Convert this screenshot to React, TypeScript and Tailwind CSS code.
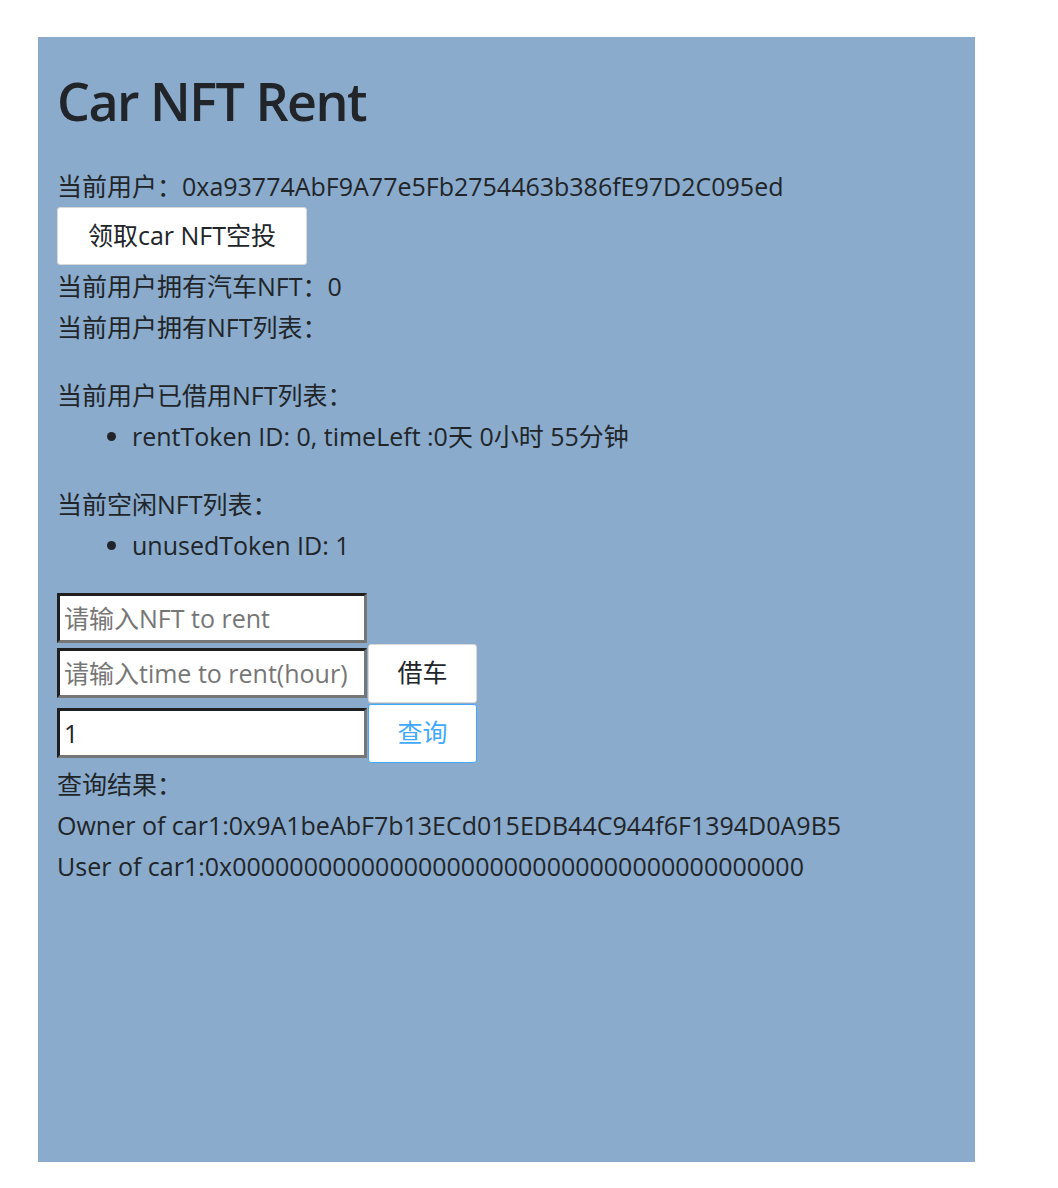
const font = "font-['Open_Sans','Noto_Sans_CJK_SC',sans-serif]"

const inputCls =
  'w-[310px] h-[50px] bg-white border-[3px] border-t-[#1f1f1f] border-l-[#1f1f1f] border-r-[#767676] border-b-[#767676] px-[4px] text-[25px] text-[#212529] placeholder:text-[#767676] outline-none align-middle'

const App = () => {
  return (
    <div className={`min-h-screen bg-white pt-[37px] pl-[38px] ${font}`}>
      <div className="w-[937px] h-[1125px] bg-[#8aabcb] px-[19px] pt-[30px] text-[#212529] text-[25px]">
        <h1 className="text-[52px] leading-[67px] font-semibold tracking-[-1.5px] mb-[32px]">Car NFT Rent</h1>
        <div className="leading-[41px]">当前用户：0xa93774AbF9A77e5Fb2754463b386fE97D2C095ed</div>
        <button className="w-[250px] h-[58px] bg-white border border-[#d9d9d9] rounded-[3px] text-[25px] text-[#212529]">
          领取car NFT空投
        </button>
        <div className="leading-[41px] mt-[1px]">当前用户拥有汽车NFT：0</div>
        <div className="leading-[41px]">当前用户拥有NFT列表：</div>
        <ul className="h-[27px]" />
        <div className="leading-[41px]">当前用户已借用NFT列表：</div>
        <ul className="list-disc pl-[75px] leading-[41px]">
          <li>rentToken ID: 0, timeLeft :0天 0小时 55分钟</li>
        </ul>
        <div className="h-[27px]" />
        <div className="leading-[41px]">当前空闲NFT列表：</div>
        <ul className="list-disc pl-[75px] leading-[41px]">
          <li>unusedToken ID: 1</li>
        </ul>
        <div className="h-[26px]" />
        <div className="flex items-center h-[51px]">
          <input className={inputCls} placeholder="请输入NFT to rent" />
        </div>
        <div className="flex items-center h-[60px]">
          <input className={inputCls} placeholder="请输入time to rent(hour)" />
          <button className="ml-[1px] w-[109px] h-[59px] bg-white border border-[#d9d9d9] rounded-[3px] text-[25px] text-[#212529]">
            借车
          </button>
        </div>
        <div className="flex items-center h-[60px]">
          <input className={inputCls} defaultValue="1" />
          <button className="ml-[1px] w-[109px] h-[59px] bg-white border border-[#40a9ff] rounded-[3px] text-[25px] text-[#40a9ff]">
            查询
          </button>
        </div>
        <div className="leading-[41px] mt-[1px]">查询结果：</div>
        <div className="leading-[41px]">Owner of car1:0x9A1beAbF7b13ECd015EDB44C944f6F1394D0A9B5</div>
        <div className="leading-[41px]">User of car1:0x0000000000000000000000000000000000000000</div>
      </div>
    </div>
  )
}

export default App
